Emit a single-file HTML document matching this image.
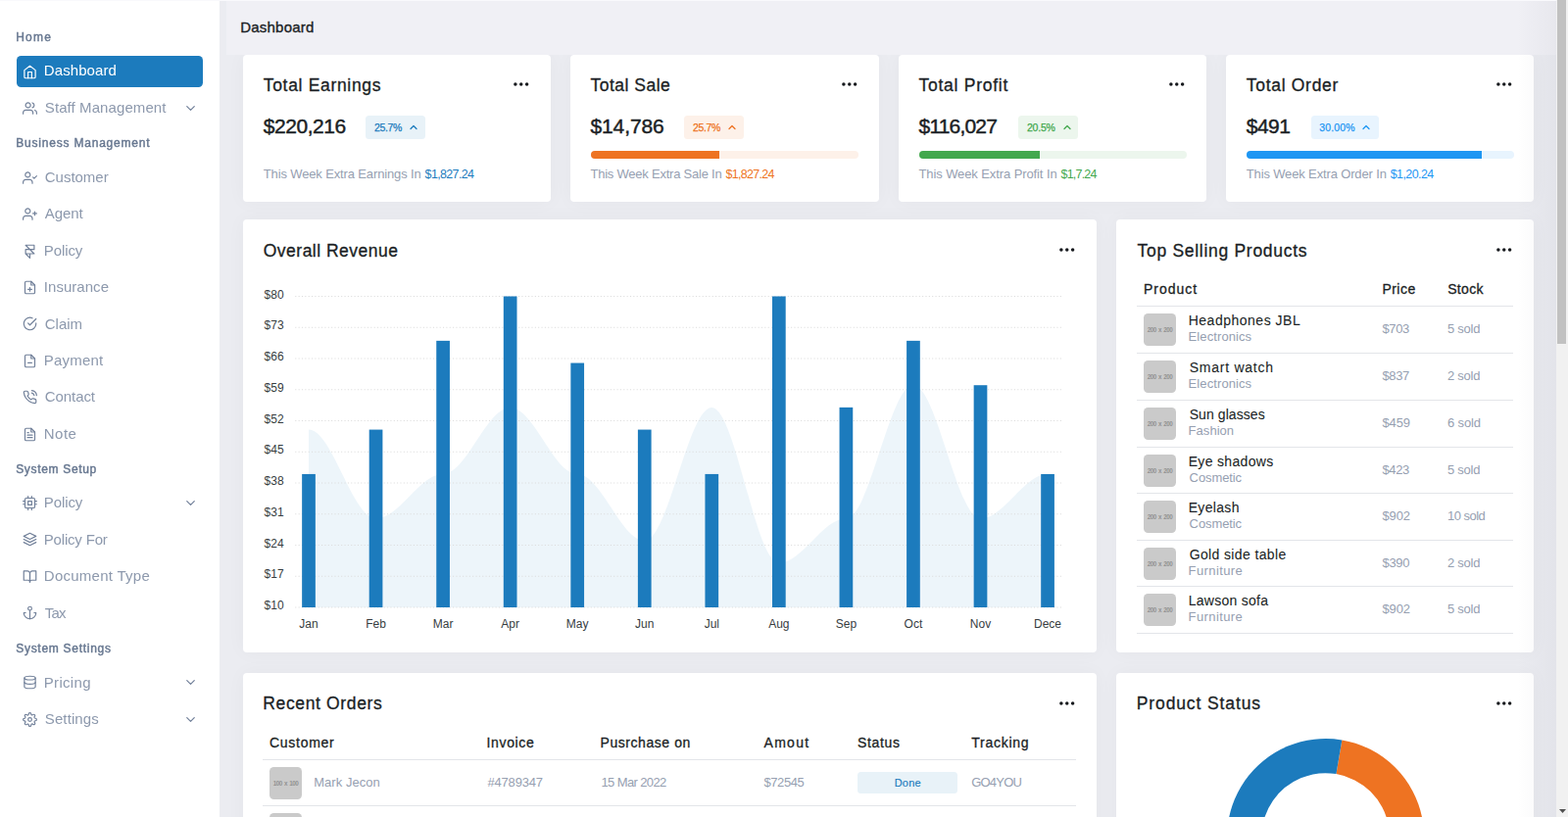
<!DOCTYPE html>
<html lang="en"><head><meta charset="utf-8"><title>Dashboard</title>
<style>
*{box-sizing:border-box;margin:0;padding:0}
html,body{width:1600px;height:834px;overflow:hidden}
body{position:relative;background:#ebecf1;font-family:"Liberation Sans",Arial,sans-serif;color:#20262d}
ul{list-style:none}
a{text-decoration:none;display:block}
h1,h3,h5,p{font-weight:400}
.topline{position:absolute;left:0;top:0;width:1588px;height:1px;background:#f9f9fc;border-bottom:0;z-index:6}
.sidebar{position:absolute;left:0;top:0;width:224px;height:834px;background:#fff;z-index:3;will-change:transform}
.nav{position:absolute;border-radius:4.5px}
.nav.active{background:#1c7bbd}
.t{position:absolute;white-space:nowrap;display:block}
.ic{position:absolute;display:block;overflow:visible}
main{position:absolute;left:0;top:0;width:1588px;height:834px;overflow:hidden}
.titlebar{position:absolute;left:231px;top:1px;width:1357px;height:54.5px;background:#f0f0f5;z-index:2}
.card{position:absolute;background:#fff;border-radius:4px;box-shadow:0 0 20px rgba(20,25,60,.035)}
.badge{position:absolute;border-radius:3.5px;display:block}
.progress{position:absolute;border-radius:5px;overflow:hidden}
.progress>div{height:100%}
.tbl{position:absolute}
.thead,.tr{position:relative;border-bottom:1px solid #e3e5e9}
.thumb{position:absolute;width:33px;height:33px;border-radius:4.5px;background:#cacaca;display:block;overflow:hidden}
.thumb b{position:absolute;left:0;top:0;width:33px;height:33px;line-height:33px;text-align:center;font-size:7px;color:#929292;font-weight:700;white-space:nowrap;letter-spacing:-.62px;word-spacing:1.3px;transform:scaleX(.9)}
.edgeshadow{position:absolute;left:1548px;top:0;width:40px;height:834px;background:linear-gradient(to right,rgba(40,40,70,0),rgba(40,40,70,.042));z-index:5;pointer-events:none}
.sbar{position:absolute;left:1588px;top:0;width:12px;height:834px;background:#f1f1f1;z-index:7}
.sbar .sthumb{position:absolute;left:1.3px;top:0;width:8.9px;height:350.5px;background:#c1c1c1}
.sbar .arr{position:absolute;left:2.9px;top:825.5px}
</style></head>
<body>
<div class="topline"></div>
<aside class="sidebar"><nav>
<ul>
<li class="lbl"><span class="t" style="left:16.20px;top:29.00px;font-size:12px;line-height:18px;color:#687891;letter-spacing:1.255px;-webkit-text-stroke:0.45px #687891;">Home</span></li>
<li><a href="#" class="nav active" style="left:17px;top:57.25px;width:190px;height:31.5px"><svg class="ic" style="left:5.60px;top:8.30px" width="15" height="15" viewBox="0 0 24 24" fill="none" stroke="#ffffff" stroke-width="1.9" stroke-linecap="round" stroke-linejoin="round"><path d="M3 9l9-7 9 7v11a2 2 0 0 1-2 2H5a2 2 0 0 1-2-2z"/><polyline points="9 22 9 12 15 12 15 22"/></svg><span class="t" style="left:27.80px;top:3.75px;font-size:15px;line-height:22.5px;color:#ffffff;letter-spacing:0.089px;">Dashboard</span></a></li>
<li><a href="#" class="nav" style="left:17px;top:94.68px;width:190px;height:31.5px"><svg class="ic" style="left:5.60px;top:8.30px" width="15" height="15" viewBox="0 0 24 24" fill="none" stroke="#72819a" stroke-width="1.9" stroke-linecap="round" stroke-linejoin="round"><path d="M17 21v-2a4 4 0 0 0-4-4H5a4 4 0 0 0-4 4v2"/><circle cx="9" cy="7" r="4"/><path d="M23 21v-2a4 4 0 0 0-3-3.87"/><path d="M16 3.13a4 4 0 0 1 0 7.75"/></svg><span class="t" style="left:28.80px;top:4.32px;font-size:15px;line-height:22.5px;color:#8d99ad;letter-spacing:0.091px;">Staff Management</span><svg class="ic" style="left:170.40px;top:8.35px" width="15" height="15" viewBox="0 0 24 24" fill="none" stroke="#72819a" stroke-width="2" stroke-linecap="round" stroke-linejoin="round"><polyline points="6 9 12 15 18 9"/></svg></a></li>
<li class="lbl"><span class="t" style="left:16.20px;top:137.00px;font-size:12px;line-height:18px;color:#687891;letter-spacing:0.798px;-webkit-text-stroke:0.45px #687891;">Business Management</span></li>
<li><a href="#" class="nav" style="left:17px;top:165.35px;width:190px;height:31.5px"><svg class="ic" style="left:5.60px;top:8.30px" width="15" height="15" viewBox="0 0 24 24" fill="none" stroke="#72819a" stroke-width="1.9" stroke-linecap="round" stroke-linejoin="round"><path d="M16 21v-2a4 4 0 0 0-4-4H5a4 4 0 0 0-4 4v2"/><circle cx="8.5" cy="7" r="4"/><polyline points="17 11 19 13 23 9"/></svg><span class="t" style="left:28.80px;top:4.65px;font-size:15px;line-height:22.5px;color:#8d99ad;letter-spacing:-0.025px;">Customer</span></a></li>
<li><a href="#" class="nav" style="left:17px;top:202.78px;width:190px;height:31.5px"><svg class="ic" style="left:5.60px;top:8.30px" width="15" height="15" viewBox="0 0 24 24" fill="none" stroke="#72819a" stroke-width="1.9" stroke-linecap="round" stroke-linejoin="round"><path d="M16 21v-2a4 4 0 0 0-4-4H5a4 4 0 0 0-4 4v2"/><circle cx="8.5" cy="7" r="4"/><line x1="20" y1="8" x2="20" y2="14"/><line x1="23" y1="11" x2="17" y2="11"/></svg><span class="t" style="left:28.80px;top:4.22px;font-size:15px;line-height:22.5px;color:#8d99ad;letter-spacing:-0.070px;">Agent</span></a></li>
<li><a href="#" class="nav" style="left:17px;top:240.21px;width:190px;height:31.5px"><svg class="ic" style="left:5.60px;top:8.30px" width="15" height="15" viewBox="0 0 24 24" fill="none" stroke="#72819a" stroke-width="1.9" stroke-linecap="round" stroke-linejoin="round"><path d="M5 16V9h14V2H5l14 14h-7m-7 0l7 7v-7m-7 0h7"/></svg><span class="t" style="left:27.80px;top:4.79px;font-size:15px;line-height:22.5px;color:#8d99ad;letter-spacing:-0.102px;">Policy</span></a></li>
<li><a href="#" class="nav" style="left:17px;top:277.64px;width:190px;height:31.5px"><svg class="ic" style="left:5.60px;top:8.30px" width="15" height="15" viewBox="0 0 24 24" fill="none" stroke="#72819a" stroke-width="1.9" stroke-linecap="round" stroke-linejoin="round"><path d="M14 2H6a2 2 0 0 0-2 2v16a2 2 0 0 0 2 2h12a2 2 0 0 0 2-2V8z"/><polyline points="14 2 14 8 20 8"/><line x1="12" y1="18" x2="12" y2="12"/><line x1="9" y1="15" x2="15" y2="15"/></svg><span class="t" style="left:27.80px;top:4.36px;font-size:15px;line-height:22.5px;color:#8d99ad;letter-spacing:0.040px;">Insurance</span></a></li>
<li><a href="#" class="nav" style="left:17px;top:315.07px;width:190px;height:31.5px"><svg class="ic" style="left:5.60px;top:8.30px" width="15" height="15" viewBox="0 0 24 24" fill="none" stroke="#72819a" stroke-width="1.9" stroke-linecap="round" stroke-linejoin="round"><path d="M22 11.08V12a10 10 0 1 1-5.93-9.14"/><polyline points="22 4 12 14.01 9 11.01"/></svg><span class="t" style="left:28.80px;top:4.93px;font-size:15px;line-height:22.5px;color:#8d99ad;letter-spacing:-0.022px;">Claim</span></a></li>
<li><a href="#" class="nav" style="left:17px;top:352.50px;width:190px;height:31.5px"><svg class="ic" style="left:5.60px;top:8.30px" width="15" height="15" viewBox="0 0 24 24" fill="none" stroke="#72819a" stroke-width="1.9" stroke-linecap="round" stroke-linejoin="round"><path d="M14 2H6a2 2 0 0 0-2 2v16a2 2 0 0 0 2 2h12a2 2 0 0 0 2-2V8z"/><polyline points="14 2 14 8 20 8"/><line x1="9" y1="15" x2="15" y2="15"/></svg><span class="t" style="left:27.80px;top:4.50px;font-size:15px;line-height:22.5px;color:#8d99ad;letter-spacing:0.204px;">Payment</span></a></li>
<li><a href="#" class="nav" style="left:17px;top:389.93px;width:190px;height:31.5px"><svg class="ic" style="left:5.60px;top:8.30px" width="15" height="15" viewBox="0 0 24 24" fill="none" stroke="#72819a" stroke-width="1.9" stroke-linecap="round" stroke-linejoin="round"><path d="M15.05 5A5 5 0 0 1 19 8.95M15.05 1A9 9 0 0 1 23 8.94m-1 7.98v3a2 2 0 0 1-2.18 2 19.79 19.79 0 0 1-8.63-3.07 19.5 19.5 0 0 1-6-6 19.79 19.79 0 0 1-3.07-8.67A2 2 0 0 1 4.11 2h3a2 2 0 0 1 2 1.72 12.84 12.84 0 0 0 .7 2.81 2 2 0 0 1-.45 2.11L8.09 9.91a16 16 0 0 0 6 6l1.27-1.27a2 2 0 0 1 2.11-.45 12.84 12.84 0 0 0 2.81.7A2 2 0 0 1 22 16.92z"/></svg><span class="t" style="left:28.80px;top:4.07px;font-size:15px;line-height:22.5px;color:#8d99ad;letter-spacing:-0.088px;">Contact</span></a></li>
<li><a href="#" class="nav" style="left:17px;top:427.36px;width:190px;height:31.5px"><svg class="ic" style="left:5.60px;top:8.30px" width="15" height="15" viewBox="0 0 24 24" fill="none" stroke="#72819a" stroke-width="1.9" stroke-linecap="round" stroke-linejoin="round"><path d="M14 2H6a2 2 0 0 0-2 2v16a2 2 0 0 0 2 2h12a2 2 0 0 0 2-2V8z"/><polyline points="14 2 14 8 20 8"/><line x1="16" y1="13" x2="8" y2="13"/><line x1="16" y1="17" x2="8" y2="17"/><polyline points="10 9 9 9 8 9"/></svg><span class="t" style="left:27.80px;top:4.64px;font-size:15px;line-height:22.5px;color:#8d99ad;letter-spacing:0.469px;">Note</span></a></li>
<li class="lbl"><span class="t" style="left:16.20px;top:470.00px;font-size:12px;line-height:18px;color:#687891;letter-spacing:0.670px;-webkit-text-stroke:0.45px #687891;">System Setup</span></li>
<li><a href="#" class="nav" style="left:17px;top:497.75px;width:190px;height:31.5px"><svg class="ic" style="left:5.60px;top:8.30px" width="15" height="15" viewBox="0 0 24 24" fill="none" stroke="#72819a" stroke-width="1.9" stroke-linecap="round" stroke-linejoin="round"><rect x="4" y="4" width="16" height="16" rx="2" ry="2"/><rect x="9" y="9" width="6" height="6"/><line x1="9" y1="1" x2="9" y2="4"/><line x1="15" y1="1" x2="15" y2="4"/><line x1="9" y1="20" x2="9" y2="23"/><line x1="15" y1="20" x2="15" y2="23"/><line x1="20" y1="9" x2="23" y2="9"/><line x1="20" y1="14" x2="23" y2="14"/><line x1="1" y1="9" x2="4" y2="9"/><line x1="1" y1="14" x2="4" y2="14"/></svg><span class="t" style="left:27.80px;top:4.25px;font-size:15px;line-height:22.5px;color:#8d99ad;letter-spacing:-0.102px;">Policy</span><svg class="ic" style="left:170.40px;top:8.35px" width="15" height="15" viewBox="0 0 24 24" fill="none" stroke="#72819a" stroke-width="2" stroke-linecap="round" stroke-linejoin="round"><polyline points="6 9 12 15 18 9"/></svg></a></li>
<li><a href="#" class="nav" style="left:17px;top:535.18px;width:190px;height:31.5px"><svg class="ic" style="left:5.60px;top:8.30px" width="15" height="15" viewBox="0 0 24 24" fill="none" stroke="#72819a" stroke-width="1.9" stroke-linecap="round" stroke-linejoin="round"><polygon points="12 2 2 7 12 12 22 7 12 2"/><polyline points="2 17 12 22 22 17"/><polyline points="2 12 12 17 22 12"/></svg><span class="t" style="left:27.80px;top:4.82px;font-size:15px;line-height:22.5px;color:#8d99ad;letter-spacing:-0.187px;">Policy For</span></a></li>
<li><a href="#" class="nav" style="left:17px;top:572.61px;width:190px;height:31.5px"><svg class="ic" style="left:5.60px;top:8.30px" width="15" height="15" viewBox="0 0 24 24" fill="none" stroke="#72819a" stroke-width="1.9" stroke-linecap="round" stroke-linejoin="round"><path d="M2 3h6a4 4 0 0 1 4 4v14a3 3 0 0 0-3-3H2z"/><path d="M22 3h-6a4 4 0 0 0-4 4v14a3 3 0 0 1 3-3h7z"/></svg><span class="t" style="left:27.80px;top:4.39px;font-size:15px;line-height:22.5px;color:#8d99ad;letter-spacing:0.262px;">Document Type</span></a></li>
<li><a href="#" class="nav" style="left:17px;top:610.04px;width:190px;height:31.5px"><svg class="ic" style="left:5.60px;top:8.30px" width="15" height="15" viewBox="0 0 24 24" fill="none" stroke="#72819a" stroke-width="1.9" stroke-linecap="round" stroke-linejoin="round"><circle cx="12" cy="5" r="3"/><line x1="12" y1="22" x2="12" y2="8"/><path d="M5 12H2a10 10 0 0 0 20 0h-3"/></svg><span class="t" style="left:28.80px;top:4.96px;font-size:15px;line-height:22.5px;color:#8d99ad;letter-spacing:-0.800px;">Tax</span></a></li>
<li class="lbl"><span class="t" style="left:16.20px;top:653.00px;font-size:12px;line-height:18px;color:#687891;letter-spacing:0.721px;-webkit-text-stroke:0.45px #687891;">System Settings</span></li>
<li><a href="#" class="nav" style="left:17px;top:681.05px;width:190px;height:31.5px"><svg class="ic" style="left:5.60px;top:8.30px" width="15" height="15" viewBox="0 0 24 24" fill="none" stroke="#72819a" stroke-width="1.9" stroke-linecap="round" stroke-linejoin="round"><ellipse cx="12" cy="5" rx="9" ry="3"/><path d="M21 12c0 1.66-4 3-9 3s-9-1.34-9-3"/><path d="M3 5v14c0 1.66 4 3 9 3s9-1.34 9-3V5"/></svg><span class="t" style="left:27.80px;top:4.95px;font-size:15px;line-height:22.5px;color:#8d99ad;letter-spacing:0.307px;">Pricing</span><svg class="ic" style="left:170.40px;top:8.35px" width="15" height="15" viewBox="0 0 24 24" fill="none" stroke="#72819a" stroke-width="2" stroke-linecap="round" stroke-linejoin="round"><polyline points="6 9 12 15 18 9"/></svg></a></li>
<li><a href="#" class="nav" style="left:17px;top:718.48px;width:190px;height:31.5px"><svg class="ic" style="left:5.60px;top:8.30px" width="15" height="15" viewBox="0 0 24 24" fill="none" stroke="#72819a" stroke-width="1.9" stroke-linecap="round" stroke-linejoin="round"><circle cx="12" cy="12" r="3"/><path d="M19.4 15a1.65 1.65 0 0 0 .33 1.82l.06.06a2 2 0 0 1 0 2.83 2 2 0 0 1-2.83 0l-.06-.06a1.65 1.65 0 0 0-1.82-.33 1.65 1.65 0 0 0-1 1.51V21a2 2 0 0 1-2 2 2 2 0 0 1-2-2v-.09A1.65 1.65 0 0 0 9 19.4a1.65 1.65 0 0 0-1.82.33l-.06.06a2 2 0 0 1-2.83 0 2 2 0 0 1 0-2.83l.06-.06a1.65 1.65 0 0 0 .33-1.82 1.65 1.65 0 0 0-1.51-1H3a2 2 0 0 1-2-2 2 2 0 0 1 2-2h.09A1.65 1.65 0 0 0 4.6 9a1.65 1.65 0 0 0-.33-1.82l-.06-.06a2 2 0 0 1 0-2.83 2 2 0 0 1 2.83 0l.06.06a1.65 1.65 0 0 0 1.82.33H9a1.65 1.65 0 0 0 1-1.51V3a2 2 0 0 1 2-2 2 2 0 0 1 2 2v.09a1.65 1.65 0 0 0 1 1.51 1.65 1.65 0 0 0 1.82-.33l.06-.06a2 2 0 0 1 2.83 0 2 2 0 0 1 0 2.83l-.06.06a1.65 1.65 0 0 0-.33 1.82V9a1.65 1.65 0 0 0 1.51 1H21a2 2 0 0 1 2 2 2 2 0 0 1-2 2h-.09a1.65 1.65 0 0 0-1.51 1z"/></svg><span class="t" style="left:28.80px;top:4.52px;font-size:15px;line-height:22.5px;color:#8d99ad;letter-spacing:0.107px;">Settings</span><svg class="ic" style="left:170.40px;top:8.35px" width="15" height="15" viewBox="0 0 24 24" fill="none" stroke="#72819a" stroke-width="2" stroke-linecap="round" stroke-linejoin="round"><polyline points="6 9 12 15 18 9"/></svg></a></li>
</ul></nav></aside>
<main>
<div class="titlebar"><h1 class="t" style="left:14.25px;top:16.00px;font-size:15px;line-height:22.5px;color:#1b1f25;letter-spacing:0.214px;-webkit-text-stroke:0.35px #1b1f25;">Dashboard</h1></div>
<section class="stats">
<div class="card" style="left:248px;top:56px;width:314px;height:150px"><h5 class="t" style="left:20.75px;top:18.00px;font-size:17.5px;line-height:26.25px;color:#1b1f25;letter-spacing:0.681px;-webkit-text-stroke:0.32px #1b1f25;">Total Earnings</h5><svg class="ic dots" style="left:276.20px;top:27.30px" width="16" height="6" viewBox="0 0 16 6"><circle cx="1.9" cy="3" r="1.75" fill="#16191d"/><circle cx="7.75" cy="3" r="1.75" fill="#16191d"/><circle cx="13.6" cy="3" r="1.75" fill="#16191d"/></svg><h3 class="t" style="left:20.75px;top:57.00px;font-size:21px;line-height:31.5px;color:#1b1f25;letter-spacing:-0.451px;-webkit-text-stroke:0.45px #1b1f25;">$220,216</h3><span class="badge" style="left:125px;top:62px;width:61px;height:24px;background:#e8f2f8"><span class="t" style="left:9.00px;top:5.00px;font-size:10.5px;line-height:15.75px;color:#1c7bbd;letter-spacing:-0.359px;-webkit-text-stroke:0.25px #1c7bbd;">25.7%</span><svg class="ic" style="left:43.00px;top:6.25px" width="12" height="12" viewBox="0 0 24 24" fill="none" stroke="#1c7bbd" stroke-width="2.6" stroke-linecap="round" stroke-linejoin="round"><polyline points="18 15 12 9 6 15"/></svg></span><p><span class="t" style="left:20.75px;top:112.00px;font-size:13px;line-height:19.5px;color:#96a0b1;letter-spacing:-0.135px;">This Week Extra Earnings In</span><span class="t" style="left:185.60px;top:113.00px;font-size:12.5px;line-height:18.75px;color:#1c7bbd;letter-spacing:-0.657px;">$1,827.24</span></p></div>
<div class="card" style="left:582px;top:56px;width:315px;height:150px"><h5 class="t" style="left:20.50px;top:18.00px;font-size:17.5px;line-height:26.25px;color:#1b1f25;letter-spacing:0.487px;-webkit-text-stroke:0.32px #1b1f25;">Total Sale</h5><svg class="ic dots" style="left:277.05px;top:27.30px" width="16" height="6" viewBox="0 0 16 6"><circle cx="1.9" cy="3" r="1.75" fill="#16191d"/><circle cx="7.75" cy="3" r="1.75" fill="#16191d"/><circle cx="13.6" cy="3" r="1.75" fill="#16191d"/></svg><h3 class="t" style="left:20.50px;top:57.00px;font-size:21px;line-height:31.5px;color:#1b1f25;letter-spacing:-0.122px;-webkit-text-stroke:0.45px #1b1f25;">$14,786</h3><span class="badge" style="left:116px;top:62px;width:61px;height:24px;background:#fdf1e9"><span class="t" style="left:9.00px;top:5.00px;font-size:10.5px;line-height:15.75px;color:#ee7322;letter-spacing:-0.359px;-webkit-text-stroke:0.25px #ee7322;">25.7%</span><svg class="ic" style="left:43.00px;top:6.25px" width="12" height="12" viewBox="0 0 24 24" fill="none" stroke="#ee7322" stroke-width="2.6" stroke-linecap="round" stroke-linejoin="round"><polyline points="18 15 12 9 6 15"/></svg></span><div class="progress" style="left:20.5px;top:98px;width:273.5px;height:8.25px;background:#fdf1e9"><div style="width:48%;background:#ee7322"></div></div><p><span class="t" style="left:20.50px;top:112.00px;font-size:13px;line-height:19.5px;color:#96a0b1;letter-spacing:-0.231px;">This Week Extra Sale In</span><span class="t" style="left:158.50px;top:113.00px;font-size:12.5px;line-height:18.75px;color:#ee7322;letter-spacing:-0.707px;">$1,827.24</span></p></div>
<div class="card" style="left:917px;top:56px;width:314px;height:150px"><h5 class="t" style="left:20.50px;top:18.00px;font-size:17.5px;line-height:26.25px;color:#1b1f25;letter-spacing:0.745px;-webkit-text-stroke:0.32px #1b1f25;">Total Profit</h5><svg class="ic dots" style="left:276.30px;top:27.30px" width="16" height="6" viewBox="0 0 16 6"><circle cx="1.9" cy="3" r="1.75" fill="#16191d"/><circle cx="7.75" cy="3" r="1.75" fill="#16191d"/><circle cx="13.6" cy="3" r="1.75" fill="#16191d"/></svg><h3 class="t" style="left:20.50px;top:57.00px;font-size:21px;line-height:31.5px;color:#1b1f25;letter-spacing:-0.800px;-webkit-text-stroke:0.45px #1b1f25;">$116,027</h3><span class="badge" style="left:122px;top:62px;width:61px;height:24px;background:#ecf6ed"><span class="t" style="left:9.00px;top:5.00px;font-size:10.5px;line-height:15.75px;color:#43a84e;letter-spacing:-0.234px;-webkit-text-stroke:0.25px #43a84e;">20.5%</span><svg class="ic" style="left:43.50px;top:6.25px" width="12" height="12" viewBox="0 0 24 24" fill="none" stroke="#43a84e" stroke-width="2.6" stroke-linecap="round" stroke-linejoin="round"><polyline points="18 15 12 9 6 15"/></svg></span><div class="progress" style="left:20.5px;top:98px;width:273.5px;height:8.25px;background:#ecf6ed"><div style="width:45%;background:#43a84e"></div></div><p><span class="t" style="left:20.50px;top:112.00px;font-size:13px;line-height:19.5px;color:#96a0b1;letter-spacing:-0.100px;">This Week Extra Profit In</span><span class="t" style="left:165.50px;top:113.00px;font-size:12.5px;line-height:18.75px;color:#43a84e;letter-spacing:-0.800px;">$1,7.24</span></p></div>
<div class="card" style="left:1251px;top:56px;width:314px;height:150px"><h5 class="t" style="left:20.75px;top:18.00px;font-size:17.5px;line-height:26.25px;color:#1b1f25;letter-spacing:0.702px;-webkit-text-stroke:0.32px #1b1f25;">Total Order</h5><svg class="ic dots" style="left:276.30px;top:27.30px" width="16" height="6" viewBox="0 0 16 6"><circle cx="1.9" cy="3" r="1.75" fill="#16191d"/><circle cx="7.75" cy="3" r="1.75" fill="#16191d"/><circle cx="13.6" cy="3" r="1.75" fill="#16191d"/></svg><h3 class="t" style="left:20.75px;top:57.00px;font-size:21px;line-height:31.5px;color:#1b1f25;letter-spacing:-0.513px;-webkit-text-stroke:0.45px #1b1f25;">$491</h3><span class="badge" style="left:87px;top:62px;width:69px;height:24px;background:#e8f4fe"><span class="t" style="left:8.25px;top:5.00px;font-size:10.5px;line-height:15.75px;color:#1e96f3;letter-spacing:0.145px;-webkit-text-stroke:0.25px #1e96f3;">30.00%</span><svg class="ic" style="left:50.25px;top:6.25px" width="12" height="12" viewBox="0 0 24 24" fill="none" stroke="#1e96f3" stroke-width="2.6" stroke-linecap="round" stroke-linejoin="round"><polyline points="18 15 12 9 6 15"/></svg></span><div class="progress" style="left:20.75px;top:98px;width:273.5px;height:8.25px;background:#e8f4fe"><div style="width:88%;background:#1e96f3"></div></div><p><span class="t" style="left:20.75px;top:112.00px;font-size:13px;line-height:19.5px;color:#96a0b1;letter-spacing:-0.143px;">This Week Extra Order In</span><span class="t" style="left:167.75px;top:113.00px;font-size:12.5px;line-height:18.75px;color:#1e96f3;letter-spacing:-0.601px;">$1,20.24</span></p></div>
</section>
<section class="card" style="left:248px;top:224px;width:871px;height:442px"><h5 class="t" style="left:20.75px;top:19.00px;font-size:17.5px;line-height:26.25px;color:#1b1f25;letter-spacing:0.492px;-webkit-text-stroke:0.32px #1b1f25;">Overall Revenue</h5><svg class="ic dots" style="left:832.75px;top:28.00px" width="16" height="6" viewBox="0 0 16 6"><circle cx="1.9" cy="3" r="1.75" fill="#16191d"/><circle cx="7.75" cy="3" r="1.75" fill="#16191d"/><circle cx="13.6" cy="3" r="1.75" fill="#16191d"/></svg><svg class="ic" style="left:0;top:0" width="872" height="442" viewBox="248 224 872 442" font-family="Liberation Sans, Helvetica, Arial, sans-serif" font-size="12"><path d="M315.00 620.00L315.00 438.57C338.99 438.57 359.56 529.29 383.55 529.29C407.54 529.29 428.11 483.93 452.10 483.93C476.09 483.93 496.66 415.89 520.65 415.89C544.64 415.89 565.21 483.93 589.20 483.93C613.19 483.93 633.76 551.96 657.75 551.96C681.74 551.96 702.31 415.89 726.30 415.89C750.29 415.89 770.86 574.64 794.85 574.64C818.84 574.64 839.41 529.29 863.40 529.29C887.39 529.29 907.96 393.21 931.95 393.21C955.94 393.21 976.51 529.29 1000.50 529.29C1024.49 529.29 1045.06 483.93 1069.05 483.93L1069.05 620.00Z" fill="#1c7bbd" fill-opacity="0.08"/><line x1="301.25" x2="1083.75" y1="302.50" y2="302.50" stroke="#dcdcdc" stroke-width="1" stroke-dasharray="1.1 2.25"/><line x1="301.25" x2="1083.75" y1="334.25" y2="334.25" stroke="#dcdcdc" stroke-width="1" stroke-dasharray="1.1 2.25"/><line x1="301.25" x2="1083.75" y1="366.00" y2="366.00" stroke="#dcdcdc" stroke-width="1" stroke-dasharray="1.1 2.25"/><line x1="301.25" x2="1083.75" y1="397.75" y2="397.75" stroke="#dcdcdc" stroke-width="1" stroke-dasharray="1.1 2.25"/><line x1="301.25" x2="1083.75" y1="429.50" y2="429.50" stroke="#dcdcdc" stroke-width="1" stroke-dasharray="1.1 2.25"/><line x1="301.25" x2="1083.75" y1="461.25" y2="461.25" stroke="#dcdcdc" stroke-width="1" stroke-dasharray="1.1 2.25"/><line x1="301.25" x2="1083.75" y1="493.00" y2="493.00" stroke="#dcdcdc" stroke-width="1" stroke-dasharray="1.1 2.25"/><line x1="301.25" x2="1083.75" y1="524.75" y2="524.75" stroke="#dcdcdc" stroke-width="1" stroke-dasharray="1.1 2.25"/><line x1="301.25" x2="1083.75" y1="556.50" y2="556.50" stroke="#dcdcdc" stroke-width="1" stroke-dasharray="1.1 2.25"/><line x1="301.25" x2="1083.75" y1="588.25" y2="588.25" stroke="#dcdcdc" stroke-width="1" stroke-dasharray="1.1 2.25"/><line x1="301.25" x2="1083.75" y1="620.00" y2="620.00" stroke="#dcdcdc" stroke-width="1" stroke-dasharray="1.1 2.25"/><rect x="308.15" y="483.93" width="13.7" height="136.07" fill="#1c7bbd"/><rect x="376.70" y="438.57" width="13.7" height="181.43" fill="#1c7bbd"/><rect x="445.25" y="347.86" width="13.7" height="272.14" fill="#1c7bbd"/><rect x="513.80" y="302.50" width="13.7" height="317.50" fill="#1c7bbd"/><rect x="582.35" y="370.54" width="13.7" height="249.46" fill="#1c7bbd"/><rect x="650.90" y="438.57" width="13.7" height="181.43" fill="#1c7bbd"/><rect x="719.45" y="483.93" width="13.7" height="136.07" fill="#1c7bbd"/><rect x="788.00" y="302.50" width="13.7" height="317.50" fill="#1c7bbd"/><rect x="856.55" y="415.89" width="13.7" height="204.11" fill="#1c7bbd"/><rect x="925.10" y="347.86" width="13.7" height="272.14" fill="#1c7bbd"/><rect x="993.65" y="393.21" width="13.7" height="226.79" fill="#1c7bbd"/><rect x="1062.20" y="483.93" width="13.7" height="136.07" fill="#1c7bbd"/> <text x="289.6" y="304.50" text-anchor="end" fill="#373d3f">$80</text> <text x="289.6" y="336.25" text-anchor="end" fill="#373d3f">$73</text> <text x="289.6" y="368.00" text-anchor="end" fill="#373d3f">$66</text> <text x="289.6" y="399.75" text-anchor="end" fill="#373d3f">$59</text> <text x="289.6" y="431.50" text-anchor="end" fill="#373d3f">$52</text> <text x="289.6" y="463.25" text-anchor="end" fill="#373d3f">$45</text> <text x="289.6" y="495.00" text-anchor="end" fill="#373d3f">$38</text> <text x="289.6" y="526.75" text-anchor="end" fill="#373d3f">$31</text> <text x="289.6" y="558.50" text-anchor="end" fill="#373d3f">$24</text> <text x="289.6" y="590.25" text-anchor="end" fill="#373d3f">$17</text> <text x="289.6" y="622.00" text-anchor="end" fill="#373d3f">$10</text><text x="315.00" y="641" text-anchor="middle" fill="#373d3f">Jan</text><text x="383.55" y="641" text-anchor="middle" fill="#373d3f">Feb</text><text x="452.10" y="641" text-anchor="middle" fill="#373d3f">Mar</text><text x="520.65" y="641" text-anchor="middle" fill="#373d3f">Apr</text><text x="589.20" y="641" text-anchor="middle" fill="#373d3f">May</text><text x="657.75" y="641" text-anchor="middle" fill="#373d3f">Jun</text><text x="726.30" y="641" text-anchor="middle" fill="#373d3f">Jul</text><text x="794.85" y="641" text-anchor="middle" fill="#373d3f">Aug</text><text x="863.40" y="641" text-anchor="middle" fill="#373d3f">Sep</text><text x="931.95" y="641" text-anchor="middle" fill="#373d3f">Oct</text><text x="1000.50" y="641" text-anchor="middle" fill="#373d3f">Nov</text><text x="1069.05" y="641" text-anchor="middle" fill="#373d3f">Dece</text></svg></section>
<section class="card" style="left:1139px;top:224px;width:426px;height:442px"><h5 class="t" style="left:21.50px;top:19.00px;font-size:17.5px;line-height:26.25px;color:#1b1f25;letter-spacing:0.709px;-webkit-text-stroke:0.32px #1b1f25;">Top Selling Products</h5><svg class="ic dots" style="left:387.50px;top:28.00px" width="16" height="6" viewBox="0 0 16 6"><circle cx="1.9" cy="3" r="1.75" fill="#16191d"/><circle cx="7.75" cy="3" r="1.75" fill="#16191d"/><circle cx="13.6" cy="3" r="1.75" fill="#16191d"/></svg><div class="tbl" style="left:21px;top:51px;width:384px"><div class="thead" style="height:38px"><span class="t" style="left:7.00px;top:10.00px;font-size:14px;line-height:21.0px;color:#1b1f25;letter-spacing:0.982px;-webkit-text-stroke:0.3px #1b1f25;">Product</span><span class="t" style="left:250.40px;top:10.00px;font-size:14px;line-height:21.0px;color:#1b1f25;letter-spacing:0.472px;-webkit-text-stroke:0.3px #1b1f25;">Price</span><span class="t" style="left:317.20px;top:10.00px;font-size:14px;line-height:21.0px;color:#1b1f25;letter-spacing:0.322px;-webkit-text-stroke:0.3px #1b1f25;">Stock</span></div><div class="tr" style="height:48px"><span class="thumb" style="left:7.00px;top:7.00px"><b>200 x 200</b></span><span class="t" style="left:52.70px;top:4.00px;font-size:14px;line-height:21.0px;color:#1b1f25;letter-spacing:0.509px;-webkit-text-stroke:0.08px #1b1f25;">Headphones JBL</span><span class="t" style="left:52.60px;top:21.00px;font-size:13px;line-height:19.5px;color:#96a0b1;letter-spacing:0.092px;">Electronics</span><span class="t" style="left:250.50px;top:13.00px;font-size:13px;line-height:19.5px;color:#96a0b1;letter-spacing:-0.397px;">$703</span><span class="t" style="left:317.00px;top:13.00px;font-size:13px;line-height:19.5px;color:#96a0b1;letter-spacing:-0.242px;">5 sold</span></div><div class="tr" style="height:48px"><span class="thumb" style="left:7.00px;top:7.00px"><b>200 x 200</b></span><span class="t" style="left:53.70px;top:4.00px;font-size:14px;line-height:21.0px;color:#1b1f25;letter-spacing:0.749px;-webkit-text-stroke:0.08px #1b1f25;">Smart watch</span><span class="t" style="left:52.60px;top:21.00px;font-size:13px;line-height:19.5px;color:#96a0b1;letter-spacing:0.092px;">Electronics</span><span class="t" style="left:250.50px;top:13.00px;font-size:13px;line-height:19.5px;color:#96a0b1;letter-spacing:-0.397px;">$837</span><span class="t" style="left:317.00px;top:13.00px;font-size:13px;line-height:19.5px;color:#96a0b1;letter-spacing:-0.242px;">2 sold</span></div><div class="tr" style="height:48px"><span class="thumb" style="left:7.00px;top:7.00px"><b>200 x 200</b></span><span class="t" style="left:53.70px;top:4.00px;font-size:14px;line-height:21.0px;color:#1b1f25;letter-spacing:0.073px;-webkit-text-stroke:0.08px #1b1f25;">Sun glasses</span><span class="t" style="left:52.60px;top:21.00px;font-size:13px;line-height:19.5px;color:#96a0b1;letter-spacing:0.038px;">Fashion</span><span class="t" style="left:250.50px;top:13.00px;font-size:13px;line-height:19.5px;color:#96a0b1;letter-spacing:-0.147px;">$459</span><span class="t" style="left:317.00px;top:13.00px;font-size:13px;line-height:19.5px;color:#96a0b1;letter-spacing:-0.142px;">6 sold</span></div><div class="tr" style="height:47px"><span class="thumb" style="left:7.00px;top:7.00px"><b>200 x 200</b></span><span class="t" style="left:52.70px;top:4.00px;font-size:14px;line-height:21.0px;color:#1b1f25;letter-spacing:0.323px;-webkit-text-stroke:0.08px #1b1f25;">Eye shadows</span><span class="t" style="left:53.60px;top:21.00px;font-size:13px;line-height:19.5px;color:#96a0b1;letter-spacing:-0.097px;">Cosmetic</span><span class="t" style="left:250.50px;top:13.00px;font-size:13px;line-height:19.5px;color:#96a0b1;letter-spacing:-0.397px;">$423</span><span class="t" style="left:317.00px;top:13.00px;font-size:13px;line-height:19.5px;color:#96a0b1;letter-spacing:-0.242px;">5 sold</span></div><div class="tr" style="height:48px"><span class="thumb" style="left:7.00px;top:7.00px"><b>200 x 200</b></span><span class="t" style="left:52.70px;top:4.00px;font-size:14px;line-height:21.0px;color:#1b1f25;letter-spacing:0.330px;-webkit-text-stroke:0.08px #1b1f25;">Eyelash</span><span class="t" style="left:53.60px;top:21.00px;font-size:13px;line-height:19.5px;color:#96a0b1;letter-spacing:-0.097px;">Cosmetic</span><span class="t" style="left:250.50px;top:13.00px;font-size:13px;line-height:19.5px;color:#96a0b1;letter-spacing:-0.147px;">$902</span><span class="t" style="left:317.00px;top:13.00px;font-size:13px;line-height:19.5px;color:#96a0b1;letter-spacing:-0.532px;">10 sold</span></div><div class="tr" style="height:47px"><span class="thumb" style="left:7.00px;top:7.00px"><b>200 x 200</b></span><span class="t" style="left:53.70px;top:4.00px;font-size:14px;line-height:21.0px;color:#1b1f25;letter-spacing:0.367px;-webkit-text-stroke:0.08px #1b1f25;">Gold side table</span><span class="t" style="left:52.60px;top:21.00px;font-size:13px;line-height:19.5px;color:#96a0b1;letter-spacing:0.401px;">Furniture</span><span class="t" style="left:250.50px;top:13.00px;font-size:13px;line-height:19.5px;color:#96a0b1;letter-spacing:-0.313px;">$390</span><span class="t" style="left:317.00px;top:13.00px;font-size:13px;line-height:19.5px;color:#96a0b1;letter-spacing:-0.242px;">2 sold</span></div><div class="tr" style="height:48px"><span class="thumb" style="left:7.00px;top:7.00px"><b>200 x 200</b></span><span class="t" style="left:52.70px;top:4.00px;font-size:14px;line-height:21.0px;color:#1b1f25;letter-spacing:0.278px;-webkit-text-stroke:0.08px #1b1f25;">Lawson sofa</span><span class="t" style="left:52.60px;top:21.00px;font-size:13px;line-height:19.5px;color:#96a0b1;letter-spacing:0.401px;">Furniture</span><span class="t" style="left:250.50px;top:13.00px;font-size:13px;line-height:19.5px;color:#96a0b1;letter-spacing:-0.147px;">$902</span><span class="t" style="left:317.00px;top:13.00px;font-size:13px;line-height:19.5px;color:#96a0b1;letter-spacing:-0.242px;">5 sold</span></div></div></section>
<section class="card" style="left:248px;top:687px;width:871px;height:413px"><h5 class="t" style="left:20.25px;top:18.00px;font-size:17.5px;line-height:26.25px;color:#1b1f25;letter-spacing:0.642px;-webkit-text-stroke:0.32px #1b1f25;">Recent Orders</h5><svg class="ic dots" style="left:832.75px;top:27.50px" width="16" height="6" viewBox="0 0 16 6"><circle cx="1.9" cy="3" r="1.75" fill="#16191d"/><circle cx="7.75" cy="3" r="1.75" fill="#16191d"/><circle cx="13.6" cy="3" r="1.75" fill="#16191d"/></svg><div class="tbl" style="left:20px;top:51px;width:830px"><div class="thead" style="height:38px"><span class="t" style="left:7.00px;top:10.00px;font-size:14px;line-height:21.0px;color:#1b1f25;letter-spacing:0.711px;-webkit-text-stroke:0.3px #1b1f25;">Customer</span><span class="t" style="left:228.50px;top:10.00px;font-size:14px;line-height:21.0px;color:#1b1f25;letter-spacing:0.655px;-webkit-text-stroke:0.3px #1b1f25;">Invoice</span><span class="t" style="left:344.50px;top:10.00px;font-size:14px;line-height:21.0px;color:#1b1f25;letter-spacing:0.562px;-webkit-text-stroke:0.3px #1b1f25;">Pusrchase on</span><span class="t" style="left:511.50px;top:10.00px;font-size:14px;line-height:21.0px;color:#1b1f25;letter-spacing:1.300px;-webkit-text-stroke:0.3px #1b1f25;">Amout</span><span class="t" style="left:607.00px;top:10.00px;font-size:14px;line-height:21.0px;color:#1b1f25;letter-spacing:0.662px;-webkit-text-stroke:0.3px #1b1f25;">Status</span><span class="t" style="left:723.25px;top:10.00px;font-size:14px;line-height:21.0px;color:#1b1f25;letter-spacing:0.732px;-webkit-text-stroke:0.3px #1b1f25;">Tracking</span></div><div class="tr" style="height:47px"><span class="thumb" style="left:7.00px;top:7.00px"><b>100 x 100</b></span><span class="t" style="left:52.25px;top:13.00px;font-size:13px;line-height:19.5px;color:#96a0b1;letter-spacing:0.032px;">Mark Jecon</span><span class="t" style="left:229.50px;top:13.00px;font-size:13px;line-height:19.5px;color:#96a0b1;letter-spacing:-0.194px;">#4789347</span><span class="t" style="left:345.50px;top:13.00px;font-size:13px;line-height:19.5px;color:#96a0b1;letter-spacing:-0.626px;">15 Mar 2022</span><span class="t" style="left:511.50px;top:13.00px;font-size:13px;line-height:19.5px;color:#96a0b1;letter-spacing:-0.430px;">$72545</span><span class="badge" style="left:607px;top:12px;width:102px;height:21.5px;background:#e8f2f8"><span class="t" style="left:37.73px;top:3.00px;font-size:11px;line-height:16.5px;color:#1c7bbd;letter-spacing:0.190px;-webkit-text-stroke:0.15px #1c7bbd;">Done</span></span><span class="t" style="left:723.25px;top:13.00px;font-size:13px;line-height:19.5px;color:#96a0b1;letter-spacing:-0.800px;">GO4YOU</span></div><div class="tr" style="height:48px"><span class="thumb" style="left:7.00px;top:7.00px"><b>100 x 100</b></span><span class="t" style="left:53.25px;top:13.00px;font-size:13px;line-height:19.5px;color:#96a0b1;letter-spacing:-0.027px;">Angelina Rose</span><span class="t" style="left:229.50px;top:13.00px;font-size:13px;line-height:19.5px;color:#96a0b1;letter-spacing:-0.194px;">#4789348</span><span class="t" style="left:345.50px;top:13.00px;font-size:13px;line-height:19.5px;color:#96a0b1;letter-spacing:-0.626px;">16 Mar 2022</span><span class="t" style="left:511.50px;top:13.00px;font-size:13px;line-height:19.5px;color:#96a0b1;letter-spacing:-0.430px;">$41253</span><span class="badge" style="left:607px;top:13px;width:102px;height:21.5px;background:#fdf1e9"><span class="t" style="left:31.10px;top:3.00px;font-size:11px;line-height:16.5px;color:#ee7322;letter-spacing:-0.042px;-webkit-text-stroke:0.15px #ee7322;">Pending</span></span><span class="t" style="left:723.25px;top:13.00px;font-size:13px;line-height:19.5px;color:#96a0b1;letter-spacing:-0.800px;">GO4ME</span></div></div></section>
<section class="card" style="left:1139px;top:687px;width:426px;height:413px"><h5 class="t" style="left:20.75px;top:18.00px;font-size:17.5px;line-height:26.25px;color:#1b1f25;letter-spacing:0.882px;-webkit-text-stroke:0.32px #1b1f25;">Product Status</h5><svg class="ic dots" style="left:387.50px;top:27.50px" width="16" height="6" viewBox="0 0 16 6"><circle cx="1.9" cy="3" r="1.75" fill="#16191d"/><circle cx="7.75" cy="3" r="1.75" fill="#16191d"/><circle cx="13.6" cy="3" r="1.75" fill="#16191d"/></svg><svg class="ic" style="left:0;top:0" width="426" height="413" viewBox="1139 687 426 413"><path d="M1369.36 755.41A100.5 100.5 0 0 1 1402.85 941.54L1385.25 911.05A65.3 65.3 0 0 0 1363.49 790.11Z" fill="#ee7322"/><path d="M1402.85 941.54A100.5 100.5 0 0 1 1265.56 904.75L1296.05 887.15A65.3 65.3 0 0 0 1385.25 911.05Z" fill="#43a84e"/><path d="M1265.56 904.75A100.5 100.5 0 0 1 1369.36 755.41L1363.49 790.11A65.3 65.3 0 0 0 1296.05 887.15Z" fill="#1c7bbd"/></svg></section>
</main>
<div class="edgeshadow"></div>
<div class="sbar"><div class="sthumb"></div><svg class="arr" width="7" height="4" viewBox="0 0 7 4"><path d="M0 0h7L3.5 4z" fill="#505050"/></svg></div>
</body></html>
